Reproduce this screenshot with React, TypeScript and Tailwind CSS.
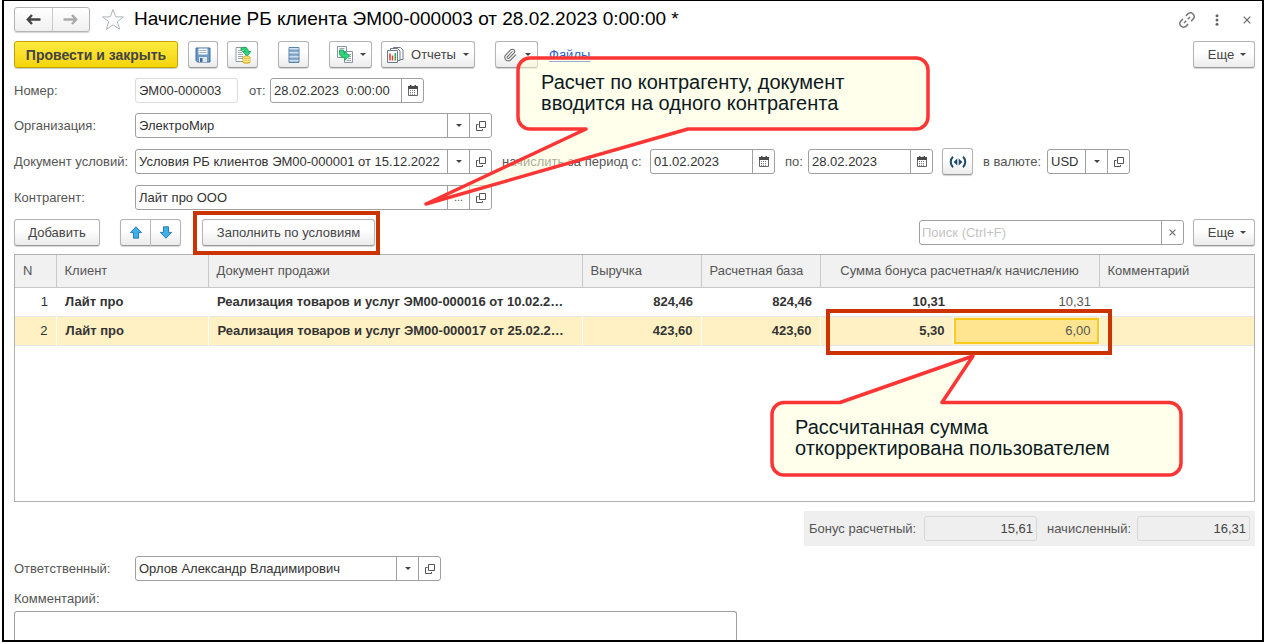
import type { ReactNode } from "react";
import { Paperclip } from "lucide-react";

const BUTTON =
  "flex h-[27px] shrink-0 items-center justify-center whitespace-nowrap rounded-[3px] border border-[#b4b4b4] border-b-[#999] bg-linear-to-b from-white from-40% to-[#ebebeb] text-[13px] text-[#444] shadow-[0_1px_1px_#d4d4d4]";
const FIELD =
  "flex h-[25px] shrink-0 overflow-hidden rounded-[3px] border border-[#a0a0a0] bg-white";

function Caret() {
  return (
    <svg width="6" height="3" viewBox="0 0 6 3" fill="#444" aria-hidden="true">
      <path d="M0 0h6L3 3z" />
    </svg>
  );
}

function CalendarIcon() {
  return (
    <svg width="10" height="11" viewBox="0 0 10 11" aria-hidden="true">
      <path d="M.5 1.5h9v9h-9z" fill="#fff" stroke="#666" />
      <path d="M0 1h10v3H0zM2 0h1.500v2H2zM6.500 0H8v2H6.500z" fill="#4a4a4a" />
      <path d="M2 5.500h6M2 7.500h6M2 9.300h6" stroke="#777" strokeDasharray="1 1" />
    </svg>
  );
}

function OpenIcon() {
  return (
    <svg width="10" height="10" viewBox="0 0 10 10" fill="none" stroke="#555" aria-hidden="true">
      <path d="M3.500.5h6v6h-6zM2.500 3.500h-2v6h6V8" />
    </svg>
  );
}

function CrossIcon({ size }: { size: number }) {
  return (
    <svg width={size} height={size} viewBox="0 0 8 8" stroke="#666" strokeWidth="1.2" aria-hidden="true">
      <path d="M.7.7l6.600 6.600M7.300.7L.7 7.300" />
    </svg>
  );
}

function FieldButton({ label, children }: { label: string; children: ReactNode }) {
  return (
    <button
      type="button"
      aria-label={label}
      className="flex w-[22px] shrink-0 items-center justify-center border-l border-[#a0a0a0] text-[11px] text-[#555]"
    >
      {children}
    </button>
  );
}

function TextInput({ id, value }: { id: string; value: string }) {
  return (
    <input
      id={id}
      defaultValue={value}
      className="min-w-0 flex-1 bg-transparent px-[3px] text-[13px] text-[#333] outline-none"
    />
  );
}

function Label({ htmlFor, children }: { htmlFor: string; children: ReactNode }) {
  return (
    <label htmlFor={htmlFor} className="w-[121px] shrink-0 whitespace-nowrap">
      {children}
    </label>
  );
}

function DateField({ id, value }: { id: string; value: string }) {
  return (
    <div className={`${FIELD} w-[125px]`}>
      <TextInput id={id} value={value} />
      <FieldButton label="Выбрать дату">
        <CalendarIcon />
      </FieldButton>
    </div>
  );
}

function MoreButton() {
  return (
    <button type="button" className={`${BUTTON} w-[62px] gap-[6px] pl-[6px]`}>
      Еще <Caret />
    </button>
  );
}

function ArrowIcon({ down = false }: { down?: boolean }) {
  return (
    <svg width="14" height="13" viewBox="0 0 14 13" className={down ? "rotate-180" : ""} aria-hidden="true">
      <path d="M7 .8L12.600 6.600H9.500v5.600h-5V6.600H1.400z" fill="#3fb0ec" stroke="#2b7fae" strokeLinejoin="round" />
    </svg>
  );
}

function NavArrow({ color, flip = false }: { color: string; flip?: boolean }) {
  return (
    <svg width="15" height="11" viewBox="0 0 15 11" className={flip ? "rotate-180" : ""} fill="none" stroke={color} strokeWidth="2.4" aria-hidden="true">
      <path d="M14.500 5.500H2M6 1L1.800 5.500 6 10" />
    </svg>
  );
}

const SaveIcon = () => (
  <svg width="16" height="16" viewBox="0 0 16 16" aria-hidden="true">
    <path d="M1 1h14v14H2.500L1 13.500z" fill="#6d9bc9" stroke="#3c6a9b" />
    <path d="M3.500 1.500h9v6h-9z" fill="#fff" />
    <path d="M4.500 3.500h7M4.500 5.500h7" stroke="#a5b5c5" />
    <path d="M4 10h8v5H4z" fill="#dfe6ec" />
    <path d="M5 11h2.500v4H5z" fill="#3c6a9b" />
  </svg>
);

const PostIcon = () => (
  <svg width="18" height="18" viewBox="0 0 18 18" aria-hidden="true">
    <path d="M2 1.500h10v14H2z" fill="#fff" stroke="#8c98a4" />
    <path d="M4 4.500h4M4 6.500h4M4 8.500h5M4 10.500h5M4 12.500h5" stroke="#9aa6b2" />
    <path d="M7 2c4-1.800 7-.3 7.500 3.500h2.500L13 10.300 8.500 5.500h2.700C11 4 9.500 3.300 7 4.500z" fill="#2fd47b" stroke="#159a52" strokeWidth=".8" />
    <path d="M9 11.200h7v5.200c-1.500 1.200-5.500 1.200-7 0z" fill="#f7cf3c" stroke="#c99a14" strokeWidth=".7" />
    <path d="M9 12.800c2 1 5 1 7 0M9 14.800c2 1 5 1 7 0" fill="none" stroke="#fff3a8" />
    <ellipse cx="12.500" cy="11.300" rx="3.500" ry="1.200" fill="#ffe98a" stroke="#c99a14" strokeWidth=".6" />
  </svg>
);

const ListIcon = () => (
  <svg width="12" height="16" viewBox="0 0 12 16" aria-hidden="true">
    <path d="M1 .5h10v15H1z" fill="#a9c5de" stroke="#5b84a8" />
    <path d="M1 4h10M1 8h10M1 12h10" stroke="#4d7ca6" strokeWidth="1.200" />
    <path d="M1.500 1.500h9M1.500 5.300h9M1.500 9.300h9M1.500 13.300h9" stroke="#d5e4f0" />
  </svg>
);

const BasedOnIcon = () => (
  <svg width="18" height="17" viewBox="0 0 18 17" aria-hidden="true">
    <path d="M1.500.5h9v11h-9z" fill="#fff" stroke="#8795a3" />
    <path d="M3.500 2.500h5" stroke="#9aa6b2" />
    <path d="M8.500 5.500h8v11h-8z" fill="#fff" stroke="#8795a3" />
    <path d="M12 8.500h3M13 10.500h2M12 12.500h3M10.500 14.500h4.500" stroke="#9aa6b2" />
    <path d="M3.500 4h4v2.500c0 .8.300 1.200 1.200 1.200V5l4.800 4.800-4.800 4.700v-2.700C5.500 11.800 3.500 10 3.500 7z" fill="#2fd47b" stroke="#159a52" strokeWidth=".8" />
  </svg>
);

const ReportsIcon = () => (
  <svg width="17" height="16" viewBox="0 0 17 16" fill="#fff" stroke="#6e7b87" aria-hidden="true">
    <path d="M6.500.5h7l2.500 2.500v9.500H6.500z" />
    <path d="M3.500 1.500h7l2.500 2.500v9.500H3.500z" />
    <path d="M.5 3.500h10v12H.5z" />
    <path d="M3 13.500V6.500" stroke="#e0352c" strokeWidth="1.500" />
    <path d="M5.500 13.500V8.500" stroke="#e0352c" strokeWidth="1.500" />
    <path d="M8.300 13.500V6" stroke="#2ea84f" strokeWidth="1.500" />
  </svg>
);

const LinkIcon = () => (
  <svg width="18" height="18" viewBox="0 0 24 24" fill="none" stroke="#777" strokeWidth="2" aria-hidden="true">
    <path d="M10.500 6.500l3-3a5 5 0 0 1 7 7l-3 3M13.500 17.500l-3 3a5 5 0 0 1-7-7l3-3M8 16l3-3M13 11l3-3" />
  </svg>
);

const RangeIcon = () => (
  <svg width="18" height="12" viewBox="0 0 18 12" aria-hidden="true">
    <path d="M4 .8C1 3.500 1 8.500 4 11.200M14 .8c3 2.700 3 7.700 0 10.400" fill="none" stroke="#1d4a6b" strokeWidth="2" />
    <path d="M8.300 2.500v7L4.600 6zM9.700 2.500v7L13.400 6z" fill="#1d4a6b" />
  </svg>
);

const HEAD = "border-r border-[#c8c8c8] px-2 text-left font-normal last:border-r-0";
const CELL = "border-white pl-[9px] pr-2 group-even:border-r last:border-r-0";

const rows = [
  { n: 1, client: "Лайт про", doc: "Реализация товаров и услуг ЭМ00-000016 от 10.02.2…", revenue: "824,46", base: "824,46", calc: "10,31", accrued: "10,31" },
  { n: 2, client: "Лайт про", doc: "Реализация товаров и услуг ЭМ00-000017 от 25.02.2…", revenue: "423,60", base: "423,60", calc: "5,30", accrued: "6,00" },
];

function BonusTable() {
  return (
    <div className="relative mt-[8px] h-[248px] border border-[#b0b0b0] bg-white">
      <table className="w-full table-fixed border-collapse text-[13px] text-[#333]">
        <colgroup>
          <col className="w-[41px]" />
          <col className="w-[152px]" />
          <col />
          <col className="w-[119px]" />
          <col className="w-[119px]" />
          <col className="w-[133px]" />
          <col className="w-[146px]" />
          <col className="w-[155px]" />
        </colgroup>
        <thead>
          <tr className="h-[32px] border-b border-[#c8c8c8] bg-[#f1f1f1] text-[#555]">
            <th className={HEAD}>N</th>
            <th className={HEAD}>Клиент</th>
            <th className={HEAD}>Документ продажи</th>
            <th className={HEAD}>Выручка</th>
            <th className={HEAD}>Расчетная база</th>
            <th colSpan={2} className="whitespace-nowrap border-r border-[#c8c8c8] px-2 text-center font-normal">
              Сумма бонуса расчетная/к начислению
            </th>
            <th className={HEAD}>Комментарий</th>
          </tr>
        </thead>
        <tbody>
          {rows.map((row) => (
            <tr key={row.n} className="group h-[29px] border-b border-[#e6e6e6] font-bold even:bg-[#fff1c4]">
              <td className={`${CELL} text-right font-normal`}>{row.n}</td>
              <td className={CELL}>{row.client}</td>
              <td className={`${CELL} overflow-hidden whitespace-nowrap`}>{row.doc}</td>
              <td className={`${CELL} text-right`}>{row.revenue}</td>
              <td className={`${CELL} text-right`}>{row.base}</td>
              <td className={`${CELL} text-right`}>{row.calc}</td>
              {row.n === 2 ? (
                <td className="border-r border-white p-0 font-normal">
                  <input
                    aria-label="Сумма бонуса к начислению"
                    defaultValue={row.accrued}
                    className="block h-[26px] w-full border-2 border-[#fbc91c] bg-[#ffe590] px-[6px] text-right text-[#555] outline-none"
                  />
                </td>
              ) : (
                <td className={`${CELL} text-right font-normal text-[#555]`}>{row.accrued}</td>
              )}
              <td className={CELL} />
            </tr>
          ))}
        </tbody>
      </table>

      <div className="pointer-events-none absolute right-[142px] top-[54px] h-[46px] w-[286px] border-4 border-[#cb3301]" />
      <div className="pointer-events-none absolute right-[70px] top-[98px] h-[124px] w-[415px]">
        <svg className="absolute inset-0" width="415" height="124" viewBox="0 0 415 124" aria-hidden="true">
          <path
            d="M15 49.500H71L204 3 173 49.500H400a12 12 0 0 1 12 12V110a12 12 0 0 1-12 12H15a12 12 0 0 1-12-12V61.500a12 12 0 0 1 12-12z"
            fill="#ffffec"
            stroke="#fd3534"
            strokeWidth="3.500"
            strokeLinejoin="round"
          />
        </svg>
        <p className="absolute left-[26px] top-[64px] whitespace-nowrap text-xl leading-[21px] text-[#0c1a1e]">
          Рассчитанная сумма
          <br />
          откорректирована пользователем
        </p>
      </div>
    </div>
  );
}

export default function App() {
  return (
    <div className="bg-white pl-[2px] font-['Liberation_Sans',Arial,sans-serif] text-[13px] text-[#555]">
      <main className="relative overflow-hidden border-2 border-t border-black bg-white pl-[10px] pr-[7px] pt-[6px]">
        <header className="flex h-[25px] items-center">
          <div className="flex h-[25px] w-[76px] overflow-hidden rounded-[3px] border border-[#b4b4b4] bg-linear-to-b from-white to-[#f0f0f0] shadow-[0_1px_1px_#d4d4d4]">
            <button type="button" aria-label="Назад" className="flex flex-1 items-center justify-center border-r border-[#c8c8c8]">
              <NavArrow color="#444" />
            </button>
            <button type="button" aria-label="Вперед" className="flex flex-1 items-center justify-center">
              <NavArrow color="#aaa" flip />
            </button>
          </div>
          <button type="button" aria-label="Добавить в избранное" className="ml-[11px]">
            <svg width="24" height="23" viewBox="0 0 24 23" fill="#fff" stroke="#adb6bf" aria-hidden="true">
              <path d="M12 1.500l2.700 7.400h7.800l-6.200 4.800 2.300 7.600L12 16.800l-6.600 4.500 2.300-7.600L1.500 8.900h7.800z" />
            </svg>
          </button>
          <h1 className="ml-[9px] flex-1 whitespace-nowrap text-[19px] text-black">
            Начисление РБ клиента ЭМ00-000003 от 28.02.2023 0:00:00 *
          </h1>
          <div className="flex items-center pr-[4px]">
            <button type="button" aria-label="Ссылка" className="flex w-[30px] justify-center">
              <LinkIcon />
            </button>
            <button type="button" aria-label="Меню" className="flex w-[30px] justify-center">
              <svg width="4" height="12" viewBox="0 0 4 12" fill="#666" aria-hidden="true">
                <circle cx="2" cy="1.700" r="1.500" />
                <circle cx="2" cy="6" r="1.500" />
                <circle cx="2" cy="10.300" r="1.500" />
              </svg>
            </button>
            <button type="button" aria-label="Закрыть" className="ml-[11px]">
              <CrossIcon size={8} />
            </button>
          </div>
        </header>

        <div className="mt-[9px] flex items-center">
          <button
            type="button"
            className="h-[27px] w-[164px] rounded-[3px] border border-[#c2a400] bg-linear-to-b from-[#ffea3d] to-[#f4d400] text-sm font-bold text-[#444] shadow-[0_1px_1px_#c8c8c8]"
          >
            Провести и закрыть
          </button>
          <button type="button" aria-label="Записать" className={`${BUTTON} ml-[10px] w-[30px]`}>
            <SaveIcon />
          </button>
          <button type="button" aria-label="Провести" className={`${BUTTON} ml-[9px] w-[31px]`}>
            <PostIcon />
          </button>
          <button type="button" aria-label="Движения документа" className={`${BUTTON} ml-[20px] w-[31px]`}>
            <ListIcon />
          </button>
          <button type="button" aria-label="Создать на основании" className={`${BUTTON} ml-[20px] w-[43px] gap-[6px]`}>
            <BasedOnIcon />
            <Caret />
          </button>
          <button type="button" className={`${BUTTON} ml-[9px] w-[94px] gap-[7px]`}>
            <ReportsIcon />
            Отчеты
            <Caret />
          </button>
          <button type="button" aria-label="Прикрепить файл" className={`${BUTTON} ml-[20px] w-[43px] gap-[8px]`}>
            <Paperclip size={14} strokeWidth={1.8} color="#666" />
            <Caret />
          </button>
          <a href="#files" className="ml-[11px] text-[13px] text-[#2f5fc4] underline underline-offset-2">
            Файлы
          </a>
          <div className="ml-auto">
            <MoreButton />
          </div>
        </div>

        <div className="mt-[10px] flex flex-col gap-[10px]">
          <div className="flex items-center">
            <Label htmlFor="number">Номер:</Label>
            <div className="flex h-[25px] w-[103px] rounded-[3px] border border-[#dcdcdc]">
              <TextInput id="number" value="ЭМ00-000003" />
            </div>
            <label htmlFor="date" className="ml-[11px] w-[21px]">
              от:
            </label>
            <div className={`${FIELD} w-[154px]`}>
              <TextInput id="date" value="28.02.2023  0:00:00" />
              <FieldButton label="Выбрать дату">
                <CalendarIcon />
              </FieldButton>
            </div>
          </div>

          <div className="flex items-center">
            <Label htmlFor="org">Организация:</Label>
            <div className={`${FIELD} w-[357px]`}>
              <TextInput id="org" value="ЭлектроМир" />
              <FieldButton label="Выбрать из списка">
                <Caret />
              </FieldButton>
              <FieldButton label="Открыть">
                <OpenIcon />
              </FieldButton>
            </div>
          </div>

          <div className="flex items-center">
            <Label htmlFor="terms">Документ условий:</Label>
            <div className={`${FIELD} w-[357px]`}>
              <TextInput id="terms" value="Условия РБ клиентов ЭМ00-000001 от 15.12.2022" />
              <FieldButton label="Выбрать из списка">
                <Caret />
              </FieldButton>
              <FieldButton label="Открыть">
                <OpenIcon />
              </FieldButton>
            </div>
            <label htmlFor="from" className="ml-[10px] w-[148px] whitespace-nowrap">
              начислить за период с:
            </label>
            <DateField id="from" value="01.02.2023" />
            <label htmlFor="to" className="ml-[10px] w-[23px]">
              по:
            </label>
            <DateField id="to" value="28.02.2023" />
            <button type="button" aria-label="Выбрать период" className={`${BUTTON} ml-[9px] w-[31px]`}>
              <RangeIcon />
            </button>
            <label htmlFor="currency" className="ml-[10px] w-[64px] whitespace-nowrap">
              в валюте:
            </label>
            <div className={`${FIELD} w-[83px]`}>
              <TextInput id="currency" value="USD" />
              <FieldButton label="Выбрать из списка">
                <Caret />
              </FieldButton>
              <FieldButton label="Открыть">
                <OpenIcon />
              </FieldButton>
            </div>
          </div>

          <div className="flex items-center">
            <Label htmlFor="partner">Контрагент:</Label>
            <div className={`${FIELD} w-[357px]`}>
              <TextInput id="partner" value="Лайт про ООО" />
              <FieldButton label="Выбрать">...</FieldButton>
              <FieldButton label="Открыть">
                <OpenIcon />
              </FieldButton>
            </div>
          </div>
        </div>

        <div className="mt-[9px] flex items-center">
          <button type="button" className={`${BUTTON} w-[86px]`}>
            Добавить
          </button>
          <div className="ml-[20px] flex">
            <button type="button" aria-label="Переместить вверх" className={`${BUTTON} w-[31px] rounded-r-none`}>
              <ArrowIcon />
            </button>
            <button type="button" aria-label="Переместить вниз" className={`${BUTTON} w-[30px] rounded-l-none border-l-0`}>
              <ArrowIcon down />
            </button>
          </div>
          <div className="relative ml-[21px]">
            <button type="button" className={`${BUTTON} w-[173px]`}>
              Заполнить по условиям
            </button>
            <div className="pointer-events-none absolute -bottom-[9px] -left-[9px] -right-[5px] -top-[8px] z-10 border-4 border-[#cb3301]" />
          </div>
          <div className={`${FIELD} ml-auto w-[265px]`}>
            <input
              type="text"
              aria-label="Поиск"
              placeholder="Поиск (Ctrl+F)"
              className="min-w-0 flex-1 px-[2px] text-[13px] outline-none placeholder:text-[#c4c4c4]"
            />
            <FieldButton label="Очистить">
              <CrossIcon size={7} />
            </FieldButton>
          </div>
          <div className="ml-[9px]">
            <MoreButton />
          </div>
        </div>

        <BonusTable />

        <div className="ml-auto mt-[9px] flex h-[35px] w-[451px] items-center bg-[#efefef] pl-[5px]">
          <label htmlFor="calc-total" className="w-[115px] whitespace-nowrap">
            Бонус расчетный:
          </label>
          <input
            id="calc-total"
            readOnly
            value="15,61"
            className="h-[25px] w-[113px] rounded-[3px] border border-[#d8d8d8] px-[3px] text-right text-[#444]"
          />
          <label htmlFor="accrued-total" className="ml-[10px] w-[90px] whitespace-nowrap">
            начисленный:
          </label>
          <input
            id="accrued-total"
            readOnly
            value="16,31"
            className="h-[25px] w-[113px] rounded-[3px] border border-[#d8d8d8] px-[3px] text-right text-[#444]"
          />
        </div>

        <div className="mt-[10px] flex items-center">
          <Label htmlFor="owner">Ответственный:</Label>
          <div className={`${FIELD} w-[306px]`}>
            <TextInput id="owner" value="Орлов Александр Владимирович" />
            <FieldButton label="Выбрать из списка">
              <Caret />
            </FieldButton>
            <FieldButton label="Открыть">
              <OpenIcon />
            </FieldButton>
          </div>
        </div>
        <label htmlFor="comment" className="mt-[8px] block leading-5">
          Комментарий:
        </label>
        <textarea
          id="comment"
          className="mt-[2px] block h-[29px] w-[723px] max-w-full resize-none rounded-t-[3px] border border-b-0 border-[#a0a0a0] px-1 outline-none"
        />

        <div className="pointer-events-none absolute left-[419px] top-[54px] z-20 h-[154px] w-[508px]">
          <svg className="absolute inset-0" width="508" height="154" viewBox="0 0 508 154" aria-hidden="true">
            <path
              d="M107 3H493a12 12 0 0 1 12 12V62a12 12 0 0 1-12 12H265L3 149 163 74H107a12 12 0 0 1-12-12V15a12 12 0 0 1 12-12z"
              fill="#ffffd9"
              fillOpacity="0.5"
              stroke="#fd3534"
              strokeWidth="3.500"
              strokeLinejoin="round"
            />
          </svg>
          <p className="absolute left-[118px] top-[17px] whitespace-nowrap text-xl leading-[21px] text-[#0c1a1e]">
            Расчет по контрагенту, документ
            <br />
            вводится на одного контрагента
          </p>
        </div>
      </main>
    </div>
  );
}
